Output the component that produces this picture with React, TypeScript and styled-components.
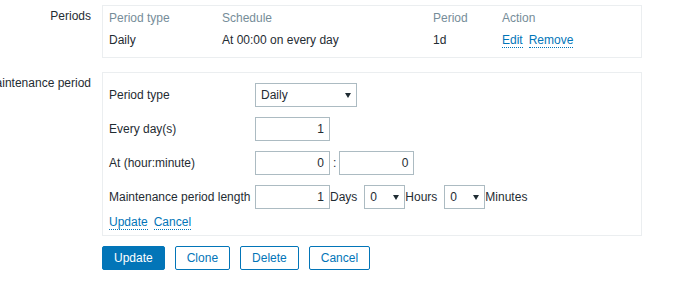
import React from "react";
import styled, { createGlobalStyle } from "styled-components";

const GlobalStyle = createGlobalStyle`
  html, body { margin: 0; padding: 0; background: #ffffff; }
  body {
    font-family: "Liberation Sans", Arial, sans-serif;
    font-size: 12px;
    line-height: 14px;
    color: #1f2c33;
  }
`;

const FormList = styled.div`
  padding-top: 5px;
  width: 642px;
`;

const FormRow = styled.div<{ $below?: number }>`
  display: grid;
  grid-template-columns: 91px 540px;
  column-gap: 11px;
  margin-bottom: ${(p) => p.$below ?? 0}px;
`;

const RowLabel = styled.div`
  display: flex;
  justify-content: flex-end;
  padding-top: 4px;
  white-space: nowrap;
  line-height: 14px;
`;

const Box = styled.div<{ $pad: string }>`
  border: 1px solid #ebeef0;
  padding: ${(p) => p.$pad};
`;

const PeriodGrid = styled.div`
  display: grid;
  grid-template-columns: 113px 211px 69px 1fr;
  grid-auto-rows: 22px;
  align-items: center;
`;

const HeadCell = styled.div`
  color: #768d99;
  white-space: nowrap;
`;

const Cell = styled.div`
  white-space: nowrap;
`;

const LinkGroup = styled.div`
  display: flex;
  gap: 6px;
  align-items: center;
`;

const Link = styled.span`
  color: #0275b8;
  border-bottom: 1px dotted #0275b8;
  cursor: pointer;
`;

const InnerForm = styled.div`
  display: grid;
  grid-template-columns: 146px 1fr;
  grid-auto-rows: 24px;
  row-gap: 10px;
  align-items: center;
`;

const InnerLabel = styled.div`
  white-space: nowrap;
`;

const FieldLine = styled.div`
  display: flex;
  align-items: center;
  height: 24px;
`;

const TextInput = styled.div`
  box-sizing: border-box;
  width: 75px;
  height: 24px;
  border: 1px solid #acbbc2;
  padding: 0 5px;
  display: flex;
  align-items: center;
  justify-content: flex-end;
  background: #ffffff;
`;

const Select = styled.div<{ $w: number }>`
  box-sizing: border-box;
  width: ${(p) => p.$w}px;
  height: 24px;
  border: 1px solid #acbbc2;
  padding: 0 5px 0 5px;
  display: flex;
  align-items: center;
  justify-content: space-between;
  background: #ffffff;
`;

const Arrow = styled.span`
  width: 0;
  height: 0;
  border-left: 3px solid transparent;
  border-right: 3px solid transparent;
  border-top: 5px solid #1f2c33;
  margin-top: 1px;
`;

const Colon = styled.span`
  margin: 0 3px;
`;

const Unit = styled.span`
  margin-right: 7px;
`;

const BoxLinks = styled(LinkGroup)`
  margin-top: 6px;
  line-height: 14px;
`;

const ButtonRow = styled.div`
  display: flex;
  gap: 10px;
`;

const Button = styled.button<{ $primary?: boolean }>`
  box-sizing: border-box;
  height: 24px;
  padding: 0 11px;
  border: 1px solid #0275b8;
  border-radius: 2px;
  background: ${(p) => (p.$primary ? "#0275b8" : "#ffffff")};
  color: ${(p) => (p.$primary ? "#ffffff" : "#0275b8")};
  font-family: "Liberation Sans", Arial, sans-serif;
  font-size: 12px;
  line-height: 14px;
  cursor: pointer;
`;

const SelectField = ({ value, width }: { value: string; width: number }) => (
  <Select $w={width}>
    <span>{value}</span>
    <Arrow />
  </Select>
);

export default function App() {
  return (
    <>
      <GlobalStyle />
      <FormList>
        <FormRow $below={14}>
          <RowLabel>
            <span>Periods</span>
          </RowLabel>
          <Box $pad="1px 6px 6px">
            <PeriodGrid>
              <HeadCell>Period type</HeadCell>
              <HeadCell>Schedule</HeadCell>
              <HeadCell>Period</HeadCell>
              <HeadCell>Action</HeadCell>
              <Cell>Daily</Cell>
              <Cell>At 00:00 on every day</Cell>
              <Cell>1d</Cell>
              <LinkGroup>
                <Link>Edit</Link>
                <Link>Remove</Link>
              </LinkGroup>
            </PeriodGrid>
          </Box>
        </FormRow>

        <FormRow $below={10}>
          <RowLabel>
            <span>Maintenance period</span>
          </RowLabel>
          <Box $pad="10px 6px 5px">
            <InnerForm>
              <InnerLabel>Period type</InnerLabel>
              <FieldLine>
                <SelectField value="Daily" width={102} />
              </FieldLine>

              <InnerLabel>Every day(s)</InnerLabel>
              <FieldLine>
                <TextInput>1</TextInput>
              </FieldLine>

              <InnerLabel>At (hour:minute)</InnerLabel>
              <FieldLine>
                <TextInput>0</TextInput>
                <Colon>:</Colon>
                <TextInput>0</TextInput>
              </FieldLine>

              <InnerLabel>Maintenance period length</InnerLabel>
              <FieldLine>
                <TextInput>1</TextInput>
                <Unit>Days</Unit>
                <SelectField value="0" width={41} />
                <Unit>Hours</Unit>
                <SelectField value="0" width={41} />
                <span>Minutes</span>
              </FieldLine>
            </InnerForm>
            <BoxLinks>
              <Link>Update</Link>
              <Link>Cancel</Link>
            </BoxLinks>
          </Box>
        </FormRow>

        <FormRow>
          <div />
          <ButtonRow>
            <Button $primary>Update</Button>
            <Button>Clone</Button>
            <Button>Delete</Button>
            <Button>Cancel</Button>
          </ButtonRow>
        </FormRow>
      </FormList>
    </>
  );
}
